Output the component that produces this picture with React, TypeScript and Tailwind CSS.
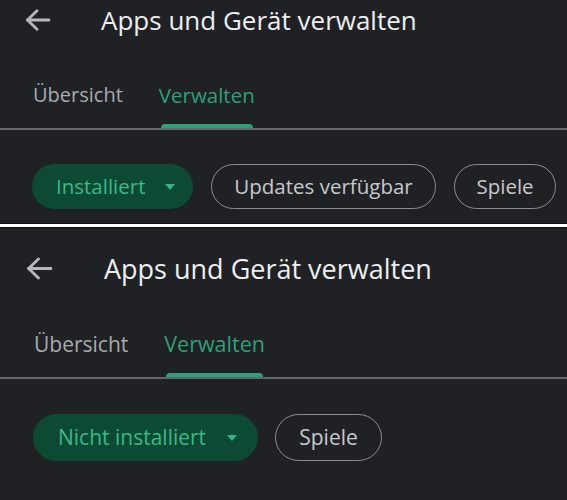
import React from 'react';

const font = { fontFamily: '"Open Sans", "Liberation Sans", sans-serif' };

function BackArrow({ size }: { size: 'sm' | 'lg' }) {
  return (
    <svg
      viewBox="0 0 26 22"
      className={size === 'sm' ? 'w-[26px] h-[22px]' : 'w-[27px] h-[23px]'}
      fill="none"
      stroke="#b6b9bc"
      strokeWidth="2.8"
      strokeLinecap="round"
      strokeLinejoin="round"
    >
      <path d="M24 11H2.5" />
      <path d="M12 1.8 2.5 11l9.5 9.2" />
    </svg>
  );
}

function Caret() {
  return (
    <svg viewBox="0 0 10 6" className="w-[10px] h-[6px]">
      <path d="M0 0h10L5 6z" fill="#35b383" />
    </svg>
  );
}

function TopPanel() {
  return (
    <div className="h-[223px] bg-[#202124] flex flex-col">
      <div className="h-[40px] flex items-center">
        <div className="pl-[25px] w-[101px] flex items-center">
          <BackArrow size="sm" />
        </div>
        <h1 className="text-[26px] font-medium text-[#eceef0] leading-none">Apps und Gerät verwalten</h1>
      </div>
      <div className="h-[88px] flex items-end pl-[33px] gap-[36px]">
        <div className="flex flex-col">
          <span className="text-[20px] leading-[28px] font-medium text-[#a7aaae]">Übersicht</span>
          <div className="mt-[15px] h-[4px]" />
        </div>
        <div className="flex flex-col">
          <span className="text-[20.5px] leading-[28px] font-medium text-[#2f9f79]">Verwalten</span>
          <div className="mt-[15px] h-[4px] mx-[2px] rounded-t-[4px] bg-[#2f9f79]" />
        </div>
      </div>
      <div className="h-[2px] bg-[#63666a]" />
      <div className="mt-[34px] flex pl-[32px] gap-[18px]">
        <div className="w-[161px] h-[45px] rounded-full bg-[#0c4a33] flex items-center pl-[24px] gap-[19px]">
          <span className="text-[20.5px] font-medium text-[#3cb887]">Installiert</span>
          <Caret />
        </div>
        <div className="w-[225px] h-[45px] rounded-full border-[1.5px] border-[#8b8e91] flex items-center justify-center">
          <span className="text-[20.5px] font-medium text-[#c7c9cc]">Updates verfügbar</span>
        </div>
        <div className="w-[102px] h-[45px] rounded-full border-[1.5px] border-[#8b8e91] flex items-center justify-center">
          <span className="text-[20.5px] font-medium text-[#c7c9cc]">Spiele</span>
        </div>
      </div>
    </div>
  );
}

function BottomPanel() {
  return (
    <div className="h-[272px] bg-[#202124] flex flex-col pt-[20px]">
      <div className="h-[40px] flex items-center">
        <div className="pl-[26px] w-[104px] flex items-center">
          <BackArrow size="lg" />
        </div>
        <h1 className="text-[27px] font-medium text-[#eceef0] leading-none">Apps und Gerät verwalten</h1>
      </div>
      <div className="h-[89px] flex items-end pl-[34px] gap-[36px]">
        <div className="flex flex-col">
          <span className="text-[21px] leading-[28px] font-medium text-[#a7aaae]">Übersicht</span>
          <div className="mt-[15px] h-[4px]" />
        </div>
        <div className="flex flex-col">
          <span className="text-[21.5px] leading-[28px] font-medium text-[#2f9f79]">Verwalten</span>
          <div className="mt-[15px] h-[4px] mx-[2px] rounded-t-[4px] bg-[#2f9f79]" />
        </div>
      </div>
      <div className="h-[2px] bg-[#63666a]" />
      <div className="mt-[35px] flex pl-[33px] gap-[17px]">
        <div className="w-[225px] h-[47px] rounded-full bg-[#0c4a33] flex items-center pl-[25px] gap-[21px]">
          <span className="text-[21px] font-medium text-[#3cb887]">Nicht installiert</span>
          <Caret />
        </div>
        <div className="w-[107px] h-[47px] rounded-full border-[1.5px] border-[#8b8e91] flex items-center justify-center">
          <span className="text-[21px] font-medium text-[#c7c9cc]">Spiele</span>
        </div>
      </div>
    </div>
  );
}

export default function App() {
  return (
    <div className="w-[567px] h-[500px] overflow-hidden bg-[#202124]" style={font}>
      <TopPanel />
      <div className="h-[5px] bg-white border-y border-[#111]" />
      <BottomPanel />
    </div>
  );
}
